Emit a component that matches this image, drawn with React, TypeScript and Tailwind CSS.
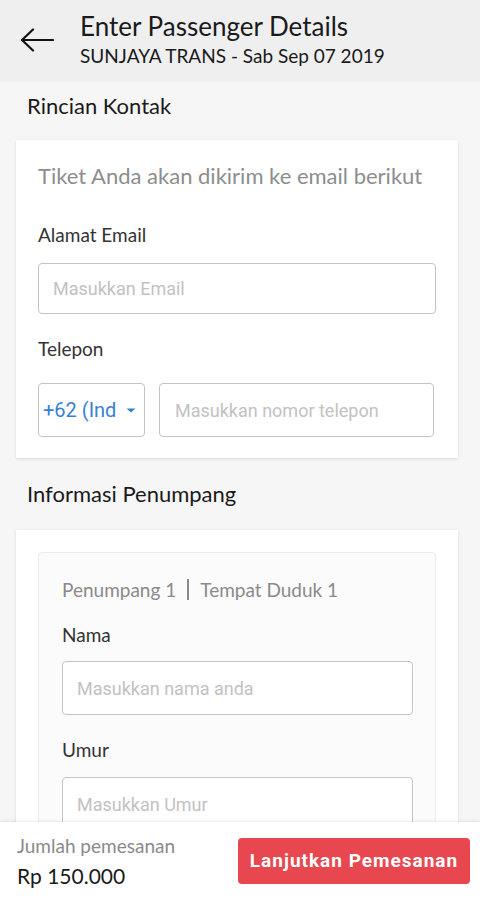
import React from "react";

export default function App() {
  return (
    <div className="w-[480px] h-[900px] flex flex-col overflow-hidden bg-[#f6f6f6] font-['Lato',sans-serif]">
      <div className="h-[82px] shrink-0 bg-[#efefef] flex items-start pt-[11px]">
        <div className="w-[80px] shrink-0 pl-[20px] pt-[17px]">
          <svg width="34" height="24" viewBox="0 0 34 24" fill="none" stroke="#111" strokeWidth="2.2" strokeLinecap="round" strokeLinejoin="round">
            <path d="M33 12H2" />
            <path d="M13 1.5L2 12L13 22.5" />
          </svg>
        </div>
        <div className="flex flex-col">
          <div className="text-[26px] leading-[31px] text-[#1a1a1a]">Enter Passenger Details</div>
          <div className="mt-[2px] text-[19px] leading-[23px] text-[#1a1a1a]">SUNJAYA TRANS - Sab Sep 07 2019</div>
        </div>
      </div>
      <div className="flex-1 overflow-hidden flex flex-col">
        <div className="pl-[27px] pt-[11px] text-[22px] leading-[26px] text-[#1a1a1a]">Rincian Kontak</div>
        <div className="mt-[21px] mx-[16px] w-[442px] shrink-0 bg-white shadow-[0_1px_3px_rgba(0,0,0,0.12)] px-[22px] pt-[23px] pb-[21px]">
          <div className="text-[22px] leading-[26px] text-[#8d8d8d]">Tiket Anda akan dikirim ke email berikut</div>
          <div className="mt-[34px] text-[19px] leading-[23px] text-[#333]">Alamat Email</div>
          <div className="mt-[17px] h-[51px] w-[398px] border border-[#c4c4c4] rounded-[4px] flex items-center pl-[14px] font-['Roboto',sans-serif] text-[18px] text-[#c2c2c2]">Masukkan Email</div>
          <div className="mt-[23px] text-[19px] leading-[23px] text-[#333]">Telepon</div>
          <div className="mt-[23px] flex gap-[14px]">
            <div className="h-[54px] w-[107px] border border-[#c4c4c4] rounded-[4px] flex items-center pl-[4px] pr-[8px] justify-between">
              <span className="font-['Roboto',sans-serif] text-[20px] text-[#3a7fd5]">+62 (Ind</span>
              <svg width="10" height="5" viewBox="0 0 10 5"><path d="M0.5 0.5h9L5 4.5z" fill="#3a7fd5" /></svg>
            </div>
            <div className="h-[54px] w-[275px] border border-[#c4c4c4] rounded-[4px] flex items-center pl-[15px] font-['Roboto',sans-serif] text-[18px] text-[#c2c2c2]">Masukkan nomor telepon</div>
          </div>
        </div>
        <div className="pl-[27px] mt-[23px] text-[22px] leading-[26px] text-[#1a1a1a]">Informasi Penumpang</div>
        <div className="mt-[23px] mx-[16px] w-[442px] shrink-0 bg-white shadow-[0_1px_3px_rgba(0,0,0,0.12)] px-[22px] pt-[22px] pb-[20px]">
          <div className="border border-[#ebebeb] rounded-[4px] bg-[#fbfbfb] px-[23px] pt-[25px] pb-[20px]">
            <div className="flex items-center text-[19px] leading-[23px] text-[#8a8a8a]">
              <span>Penumpang 1</span>
              <span className="mx-[11px] w-[2px] h-[21px] bg-[#8a8a8a]" />
              <span>Tempat Duduk 1</span>
            </div>
            <div className="mt-[22px] text-[19px] leading-[23px] text-[#333]">Nama</div>
            <div className="mt-[15px] h-[54px] w-[351px] bg-white border border-[#c4c4c4] rounded-[4px] flex items-center pl-[14px] font-['Roboto',sans-serif] text-[18px] text-[#c2c2c2]">Masukkan nama anda</div>
            <div className="mt-[23px] text-[19px] leading-[23px] text-[#333]">Umur</div>
            <div className="mt-[16px] h-[54px] w-[351px] bg-white border border-[#c4c4c4] rounded-[4px] flex items-center pl-[14px] font-['Roboto',sans-serif] text-[18px] text-[#c2c2c2]">Masukkan Umur</div>
          </div>
        </div>
      </div>
      <div className="h-[78px] shrink-0 bg-white shadow-[0_-1px_3px_rgba(0,0,0,0.08)] flex items-start justify-between pl-[17px] pr-[10px]">
        <div className="flex flex-col pt-[12px]">
          <div className="text-[19px] leading-[23px] text-[#8a8a8a]">Jumlah pemesanan</div>
          <div className="mt-[6px] text-[21px] leading-[25px] text-[#1a1a1a]">Rp 150.000</div>
        </div>
        <div className="mt-[16px] h-[46px] w-[232px] rounded-[4px] bg-[#e8474f] flex items-center justify-center font-['Roboto',sans-serif] font-bold text-[19px] tracking-[1px] text-white">Lanjutkan Pemesanan</div>
      </div>
    </div>
  );
}
